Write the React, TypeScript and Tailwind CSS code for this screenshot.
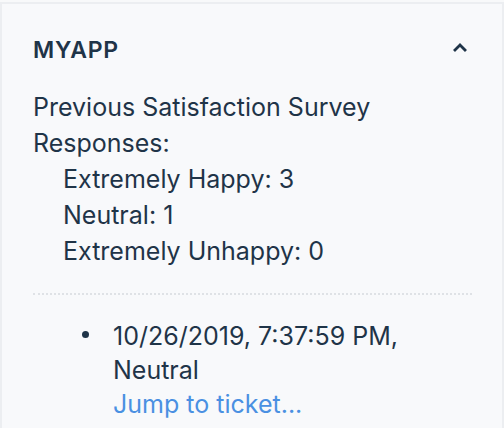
export default function App() {
  const counts = [
    { label: 'Extremely Happy', value: 3 },
    { label: 'Neutral', value: 1 },
    { label: 'Extremely Unhappy', value: 0 },
  ];

  return (
    <div className="h-[428px] w-[504px] overflow-hidden bg-[#f8f9fa] pt-[2px] font-['Inter',sans-serif] text-[#1f3448]">
      {/* App panel */}
      <div className="h-full border-x-2 border-t-2 border-[#eceef1] bg-[#f8f9fb] pl-[31px] pr-[30px]">
        <div className="flex h-[28px] items-center justify-between mt-[32px]">
          <h2 className="text-[23px] font-semibold leading-[28px] tracking-[0.03em]">MYAPP</h2>
          <svg className="mr-[4px] mb-[6px] h-[12px] w-[16px]" viewBox="0 0 16 12" fill="none">
            <path d="M3 9 L8 4 L13 9" stroke="#1f3448" strokeWidth="2.8" strokeLinecap="square" />
          </svg>
        </div>

        <div className="mt-[25px] text-[25px] leading-[36px]">
          <p>Previous Satisfaction Survey Responses:</p>
          <ul className="pl-[30px]">
            {counts.map((c) => (
              <li key={c.label}>
                {c.label}: {c.value}
              </li>
            ))}
          </ul>
        </div>

        <div className="mt-[24px] border-t-2 border-dotted border-[#dfe2e6]" />

        {/* Previous tickets */}
        <ul className="mt-[24px] pl-[49px] text-[25px] leading-[34px]">
          <li className="flex gap-[24px]">
            <span className="mt-[12px] h-[7px] w-[7px] shrink-0 rounded-full bg-[#1f3448]" />
            <div>
              10/26/2019, 7:37:59 PM, Neutral
              <br />
              <a className="text-[#4a90e2]">Jump to ticket...</a>
            </div>
          </li>
        </ul>
      </div>
    </div>
  );
}
